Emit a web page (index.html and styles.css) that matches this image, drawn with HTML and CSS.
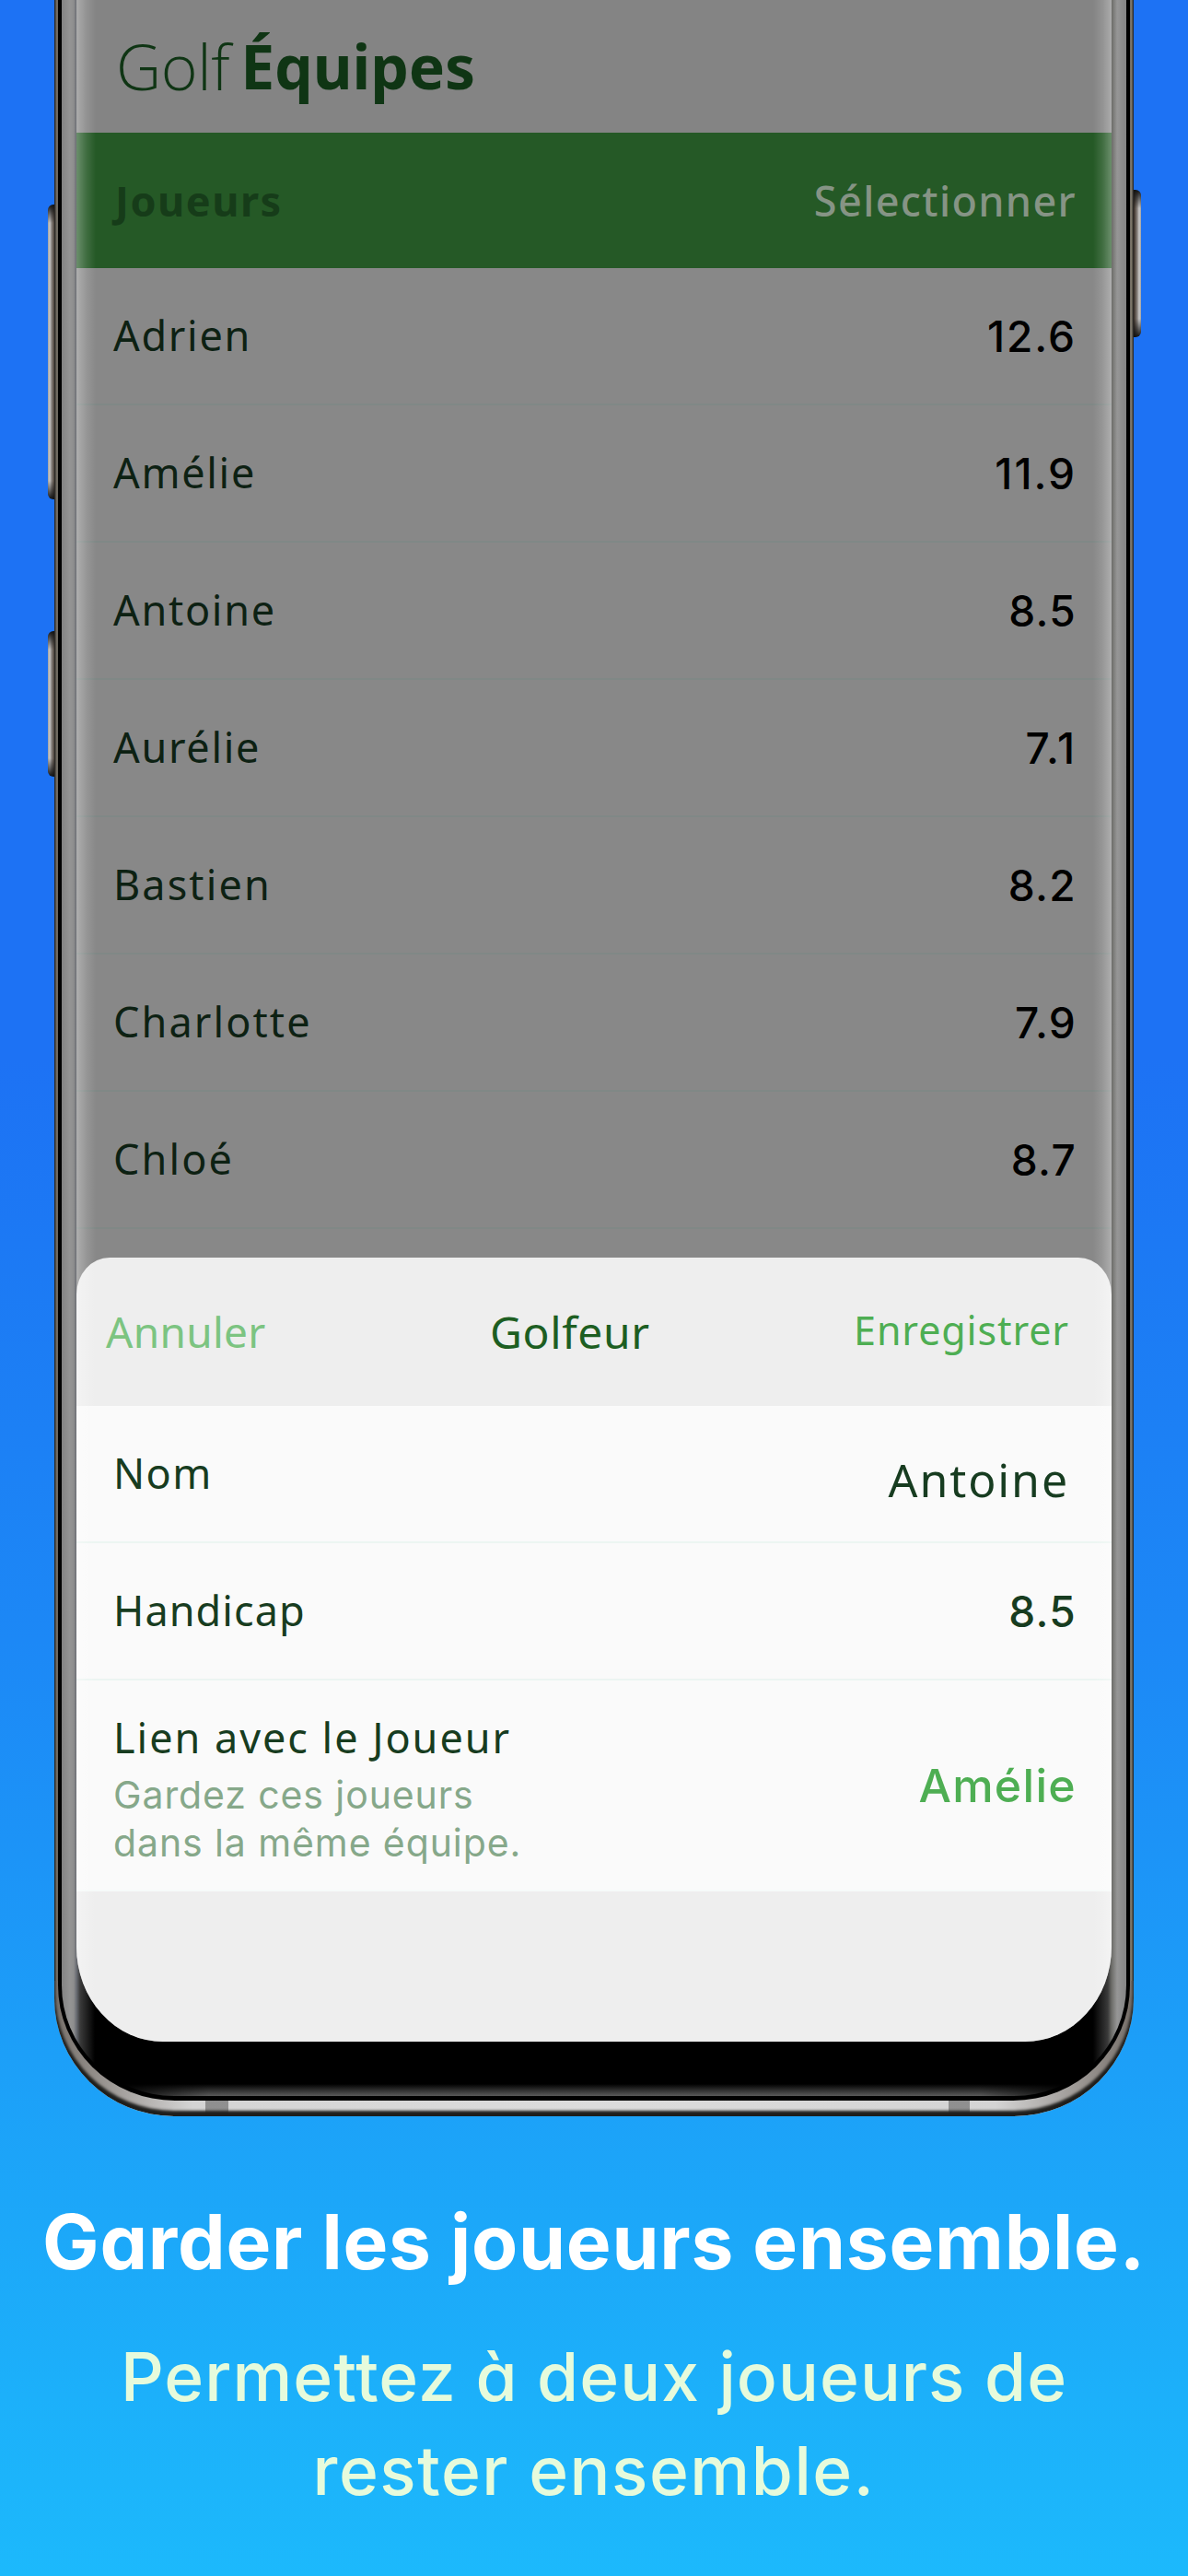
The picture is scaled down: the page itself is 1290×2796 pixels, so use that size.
FILE: index.html
```html
<!DOCTYPE html>
<html lang="fr">
<head>
<meta charset="utf-8">
<title>Golf Équipes</title>
<link rel="stylesheet" href="styles.css">
</head>
<body>
<main class="page">
  <div class="phone">
    <span class="key key-volume"></span>
    <span class="key key-assist"></span>
    <span class="key key-power"></span>
    <div class="metal">
      <span class="antenna antenna-left"></span>
      <span class="antenna antenna-right"></span>
      <div class="rim">
        <div class="glass">
          <div class="screen">
            <header class="app-header"><span class="brand-light">Golf</span><span class="brand-bold">Équipes</span></header>
            <div class="list-header"><span class="list-title">Joueurs</span><span class="list-action">Sélectionner</span></div>
            <ul class="players">
              <li class="row"><span class="name">Adrien</span><span class="score wide">12.6</span></li>
              <li class="row"><span class="name">Amélie</span><span class="score wide">11.9</span></li>
              <li class="row"><span class="name">Antoine</span><span class="score">8.5</span></li>
              <li class="row"><span class="name">Aurélie</span><span class="score wide">7.1</span></li>
              <li class="row"><span class="name loose">Bastien</span><span class="score">8.2</span></li>
              <li class="row"><span class="name loose">Charlotte</span><span class="score">7.9</span></li>
              <li class="row"><span class="name loose">Chloé</span><span class="score">8.7</span></li>
            </ul>
            <section class="sheet">
              <div class="sheet-bar"><span class="cancel">Annuler</span><span class="sheet-title">Golfeur</span><span class="save">Enregistrer</span></div>
              <div class="field"><span class="label">Nom</span><span class="name-value">Antoine</span></div>
              <div class="field"><span class="label handicap">Handicap</span><span class="score field-score">8.5</span></div>
              <div class="field link-field">
                <div class="link-text">
                  <div class="link-label">Lien avec le Joueur</div>
                  <div class="link-hint">Gardez ces joueurs<br>dans la même équipe.</div>
                </div>
                <span class="link-value">Amélie</span>
              </div>
            </section>
          </div>
        </div>
      </div>
    </div>
  </div>
  <h1 class="headline">Garder les joueurs ensemble.</h1>
  <p class="tagline">Permettez à deux joueurs de<br><span class="tagline-end">rester ensemble.</span></p>
</main>
</body>
</html>
```
FILE: styles.css
```css
* { box-sizing: border-box; }

body { margin: 0; }

.page {
  height: 2796px;
  overflow: hidden;
  display: flex;
  flex-direction: column;
  align-items: center;
  background: linear-gradient(180deg, #1d72f4 0, #1d72f4 1150px, #1c79f4 1350px, #1c88f6 1780px, #1c9ff8 2230px, #1cb0fa 2600px, #1cb9fc 2796px);
  font-family: "Noto Sans", sans-serif;
  white-space: nowrap;
}

/* Phone body */
.phone {
  position: relative;
  width: 1172px;
  height: 2297px;
  flex: none;
}

.metal {
  position: relative;
  height: 100%;
  padding: 0 4px 17px;
  border-radius: 0 0 130px 130px / 0 0 128px 128px;
  overflow: hidden;
  background:
    linear-gradient(90deg, #38332f 0, #857d72 2px, #6b675f 4px, transparent 4px, transparent 1168px, #6b675f 1168px, #948d7e 1170px, #38332f 1172px) 0 0 / 100% 2150px no-repeat,
    linear-gradient(90deg, #77706a 0, #d4d4d4 150px, #dcdcdc 50%, #d4d4d4 1022px, #77706a 100%);
}

.metal::after {
  content: "";
  position: absolute;
  inset: 0;
  border-radius: inherit;
  box-shadow: inset 0 -5px 3px 1px #1e1e1c;
  pointer-events: none;
}

.rim {
  height: 100%;
  padding: 0 4px 5px;
  background: #000;
  border-radius: 0 0 127px 127px / 0 0 125px 125px;
}

.glass {
  position: relative;
  height: 100%;
  padding: 0 16px 59px;
  overflow: hidden;
  border-radius: 0 0 122px 122px / 0 0 120px 120px;
  background: linear-gradient(90deg, #838383 0, #949494 9px, #8e8e8e 13px, #6a6d74 16px, #3a3a3a 20px, #000 36px, #000 1120px, #3a3a3a 1136px, #6c6c68 1140px, #969696 1146px, #858585 1156px);
}

/* Reflection along the lower lip of the glass */
.glass::after {
  content: "";
  position: absolute;
  left: 50px;
  right: 50px;
  bottom: 0;
  height: 13px;
  background: linear-gradient(0deg, #5a5a5a 0, #2a2a2a 7px, transparent 13px);
  -webkit-mask-image: linear-gradient(90deg, transparent 0, #000 110px, #000 calc(100% - 110px), transparent 100%);
  mask-image: linear-gradient(90deg, transparent 0, #000 110px, #000 calc(100% - 110px), transparent 100%);
}

.antenna {
  position: absolute;
  bottom: 0;
  width: 25px;
  height: 17px;
  background: rgba(60, 60, 60, .45);
}
.antenna-left { left: 164px; }
.antenna-right { left: 971px; width: 23px; }

.key {
  position: absolute;
  width: 10px;
  background:
    linear-gradient(180deg, #111 0, rgba(17, 17, 17, 0) 20px, rgba(17, 17, 17, 0) calc(100% - 20px), #111 100%),
    linear-gradient(90deg, #a0a0a0 0, #cacaca 2px, #8a8480 4px, #4a4038 7px, #15100e 9px);
  border-radius: 6px 0 0 6px;
}
.key-volume { left: -7px; top: 222px; height: 320px; }
.key-assist { left: -7px; top: 685px; height: 158px; }
.key-power { right: -8px; top: 206px; height: 160px; transform: scaleX(-1); }

/* Screen */
.screen {
  position: relative;
  height: 100%;
  display: flex;
  flex-direction: column;
  overflow: hidden;
  background: #888;
  border-radius: 0 0 94px 94px / 0 0 103px 103px;
}

.screen::after {
  content: "";
  position: absolute;
  inset: 0;
  background: linear-gradient(90deg, rgba(255, 255, 255, .32) 0, rgba(255, 255, 255, .12) 11px, transparent 21px, transparent 1104px, rgba(255, 255, 255, .12) 1114px, rgba(255, 255, 255, .32) 1124px);
  pointer-events: none;
}

.app-header {
  height: 144px;
  flex: none;
  display: flex;
  padding-left: 43px;
  line-height: 144px;
  background: #848484;
  color: #0f3514;
}
.brand-light { font: 300 68px/143px "Open Sans", sans-serif; letter-spacing: -.4px; }
.brand-bold { margin-left: 12px; font-size: 66px; font-weight: 700; letter-spacing: -.1px; line-height: 143px; }

.list-header {
  height: 147px;
  flex: none;
  display: flex;
  align-items: center;
  justify-content: space-between;
  padding: 0 38px 0 42px;
  background: #255926;
  font-size: 45px;
}
.list-title { color: #163c19; font-weight: 700; letter-spacing: 1.5px; }
.list-action { color: #869485; font-weight: 500; letter-spacing: 1.36px; }

.players {
  height: 1110px;
  flex: none;
  margin: 0;
  padding: 0;
  list-style: none;
}

.row {
  height: 149px;
  display: flex;
  align-items: center;
  justify-content: space-between;
  padding: 0 38px 0 40px;
  border-bottom: 2px solid #808886;
}
.name { padding-bottom: 2px; color: #0d2113; font-size: 45px; letter-spacing: 1.7px; }
.name.loose { letter-spacing: 2.1px; }
.score { font: 450 46px "Inter", sans-serif; letter-spacing: 1.3px; color: #000; }
.score.wide { letter-spacing: 2px; }

/* Golfer sheet */
.sheet {
  flex: 1;
  margin-top: -36px;
  background: #eee;
  border-radius: 36px 36px 0 0 / 40px 40px 0 0;
}

.sheet-bar {
  height: 161px;
  display: grid;
  grid-template-columns: 417px 1fr auto;
  align-items: center;
  padding: 0 46px 0 32px;
}
.cancel { padding-bottom: 2px; color: #7cc481; font-size: 46px; letter-spacing: .3px; }
.sheet-title { color: #1d5e22; font-size: 48px; letter-spacing: .6px; }
.save { padding-bottom: 5px; color: #4eae53; font-size: 43px; letter-spacing: .88px; }

.field {
  height: 149px;
  display: flex;
  align-items: center;
  justify-content: space-between;
  padding: 0 38px 0 40px;
  background: #fafafa;
  border-bottom: 2px solid #ecf5f2;
}
.label { padding-bottom: 2px; color: #173c20; font-size: 45px; letter-spacing: 1.4px; }
.label.handicap { letter-spacing: 1.07px; }
.name-value { margin-right: 8px; padding-top: 13px; color: #173c20; font-size: 50px; letter-spacing: 1.9px; }
.score.field-score { color: #173c20; }

.link-field { height: 229px; align-items: flex-start; padding-top: 31px; border-bottom-color: #f6faf9; }
.link-label { margin-bottom: 6px; color: #173c20; font-size: 45px; line-height: 61px; letter-spacing: 1.97px; }
.link-hint { color: #86a88a; font: 400 41px/52px "Inter", sans-serif; letter-spacing: .9px; }
.link-value { align-self: center; margin-top: -31px; color: #4eae53; font: 500 50px "Inter", sans-serif; letter-spacing: 1.3px; }

/* Caption */
.headline {
  margin: 87px 0 45px;
  color: #fff;
  font: 700 82px/100px "Inter", sans-serif;
  font-feature-settings: "cv11";
  letter-spacing: .77px;
}
.tagline {
  margin: 0;
  color: #e6fbdc;
  text-align: center;
  font: 500 73px/102px "Inter", sans-serif;
  font-feature-settings: "cv11";
  letter-spacing: 1.05px;
}
.tagline-end { letter-spacing: 1.55px; }
```
